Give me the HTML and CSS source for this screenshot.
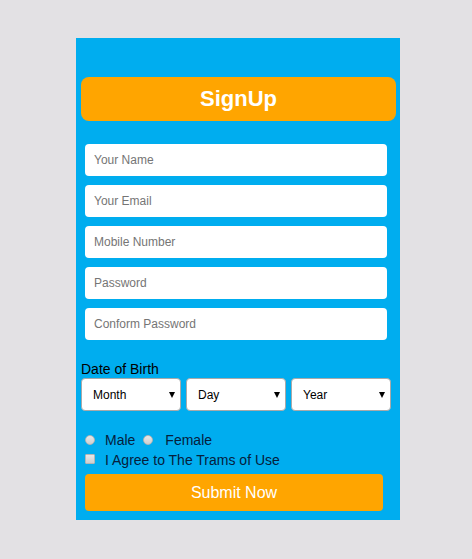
FILE: index.html
```html
<!DOCTYPE html>
<html>
<head>
<meta charset="utf-8">
<link rel="stylesheet" href="styles.css">
</head>
<body>
<div class="panel">
  <div class="header">SignUp</div>
  <div class="fields">
    <input class="field" type="text" placeholder="Your Name">
    <input class="field" type="text" placeholder="Your Email">
    <input class="field" type="text" placeholder="Mobile Number">
    <input class="field" type="password" placeholder="Password">
    <input class="field" type="password" placeholder="Conform Password">
  </div>
  <div class="dob-label">Date of Birth</div>
  <div class="dob">
    <span class="sel"><select><option>Month</option></select></span>
    <span class="sel"><select><option>Day</option></select></span>
    <span class="sel"><select><option>Year</option></select></span>
  </div>
  <div class="row">
    <input class="radio" type="radio" name="g"><span class="lbl">Male</span>
    <input class="radio r2" type="radio" name="g"><span class="lbl l2">Female</span>
  </div>
  <div class="row">
    <input class="check" type="checkbox"><span class="lbl">I Agree to The Trams of Use</span>
  </div>
  <button class="submit">Submit Now</button>
</div>
</body>
</html>
```
FILE: styles.css
```css
* { box-sizing: border-box; }
body {
  margin: 0;
  background: #e3e1e4;
  font-family: "Liberation Sans", Arial, sans-serif;
}
.panel {
  width: 324px;
  height: 482px;
  margin: 38px 0 0 76px;
  background: #00adef;
  padding: 39px 4px 9px 5px;
}
.header {
  height: 44px;
  background: #ffa500;
  border-radius: 8px;
  color: #fff;
  font-weight: bold;
  font-size: 22px;
  line-height: 44px;
  text-align: center;
}
.fields {
  margin: 23px 0 0 4px;
  width: 302px;
  display: flex;
  flex-direction: column;
  gap: 9px;
}
.field {
  display: block;
  width: 302px;
  height: 32px;
  border: none;
  border-radius: 4px;
  background: #fff;
  padding: 0 9px;
  font-family: "Liberation Sans", Arial, sans-serif;
  font-size: 12px;
  color: #333;
  outline: none;
}
.field::placeholder { color: #757575; }
.dob-label {
  margin-top: 21px;
  font-size: 14px;
  line-height: 16px;
  color: #000;
}
.dob {
  margin-top: 1px;
  display: flex;
  gap: 5px;
}
.sel {
  position: relative;
  display: block;
  width: 100px;
  height: 33px;
}
.sel::after {
  content: "";
  position: absolute;
  right: 6px;
  top: 14px;
  border-left: 3px solid transparent;
  border-right: 3px solid transparent;
  border-top: 6px solid #000;
  pointer-events: none;
}
.sel select {
  appearance: none;
  -webkit-appearance: none;
  width: 100%;
  height: 33px;
  border: 1px solid #a9a9a9;
  border-radius: 4px;
  background: #fff;
  padding: 0 0 0 11px;
  font-family: "Liberation Sans", Arial, sans-serif;
  font-size: 12px;
  color: #000;
}
.row {
  display: flex;
  align-items: center;
  height: 20px;
  margin-left: 4px;
}
.dob + .row { margin-top: 19px; }
.radio, .check {
  appearance: none;
  -webkit-appearance: none;
  margin: 0;
  width: 10px;
  height: 10px;
  background: linear-gradient(#e8e8e8, #cfcfcf);
  border: 1px solid #b5b5b5;
}
.radio { border-radius: 50%; }
.check { margin-top: -3px; border-radius: 1px; }
.r2 { margin-left: 8px; }
.lbl {
  margin-left: 10px;
  font-size: 14px;
  color: #06203c;
}
.l2 { margin-left: 12px; }
.submit {
  display: block;
  margin: 4px 0 0 4px;
  width: 298px;
  height: 37px;
  border: none;
  border-radius: 4px;
  background: #ffa500;
  color: #fff;
  font-family: "Liberation Sans", Arial, sans-serif;
  font-size: 16px;
}
```
